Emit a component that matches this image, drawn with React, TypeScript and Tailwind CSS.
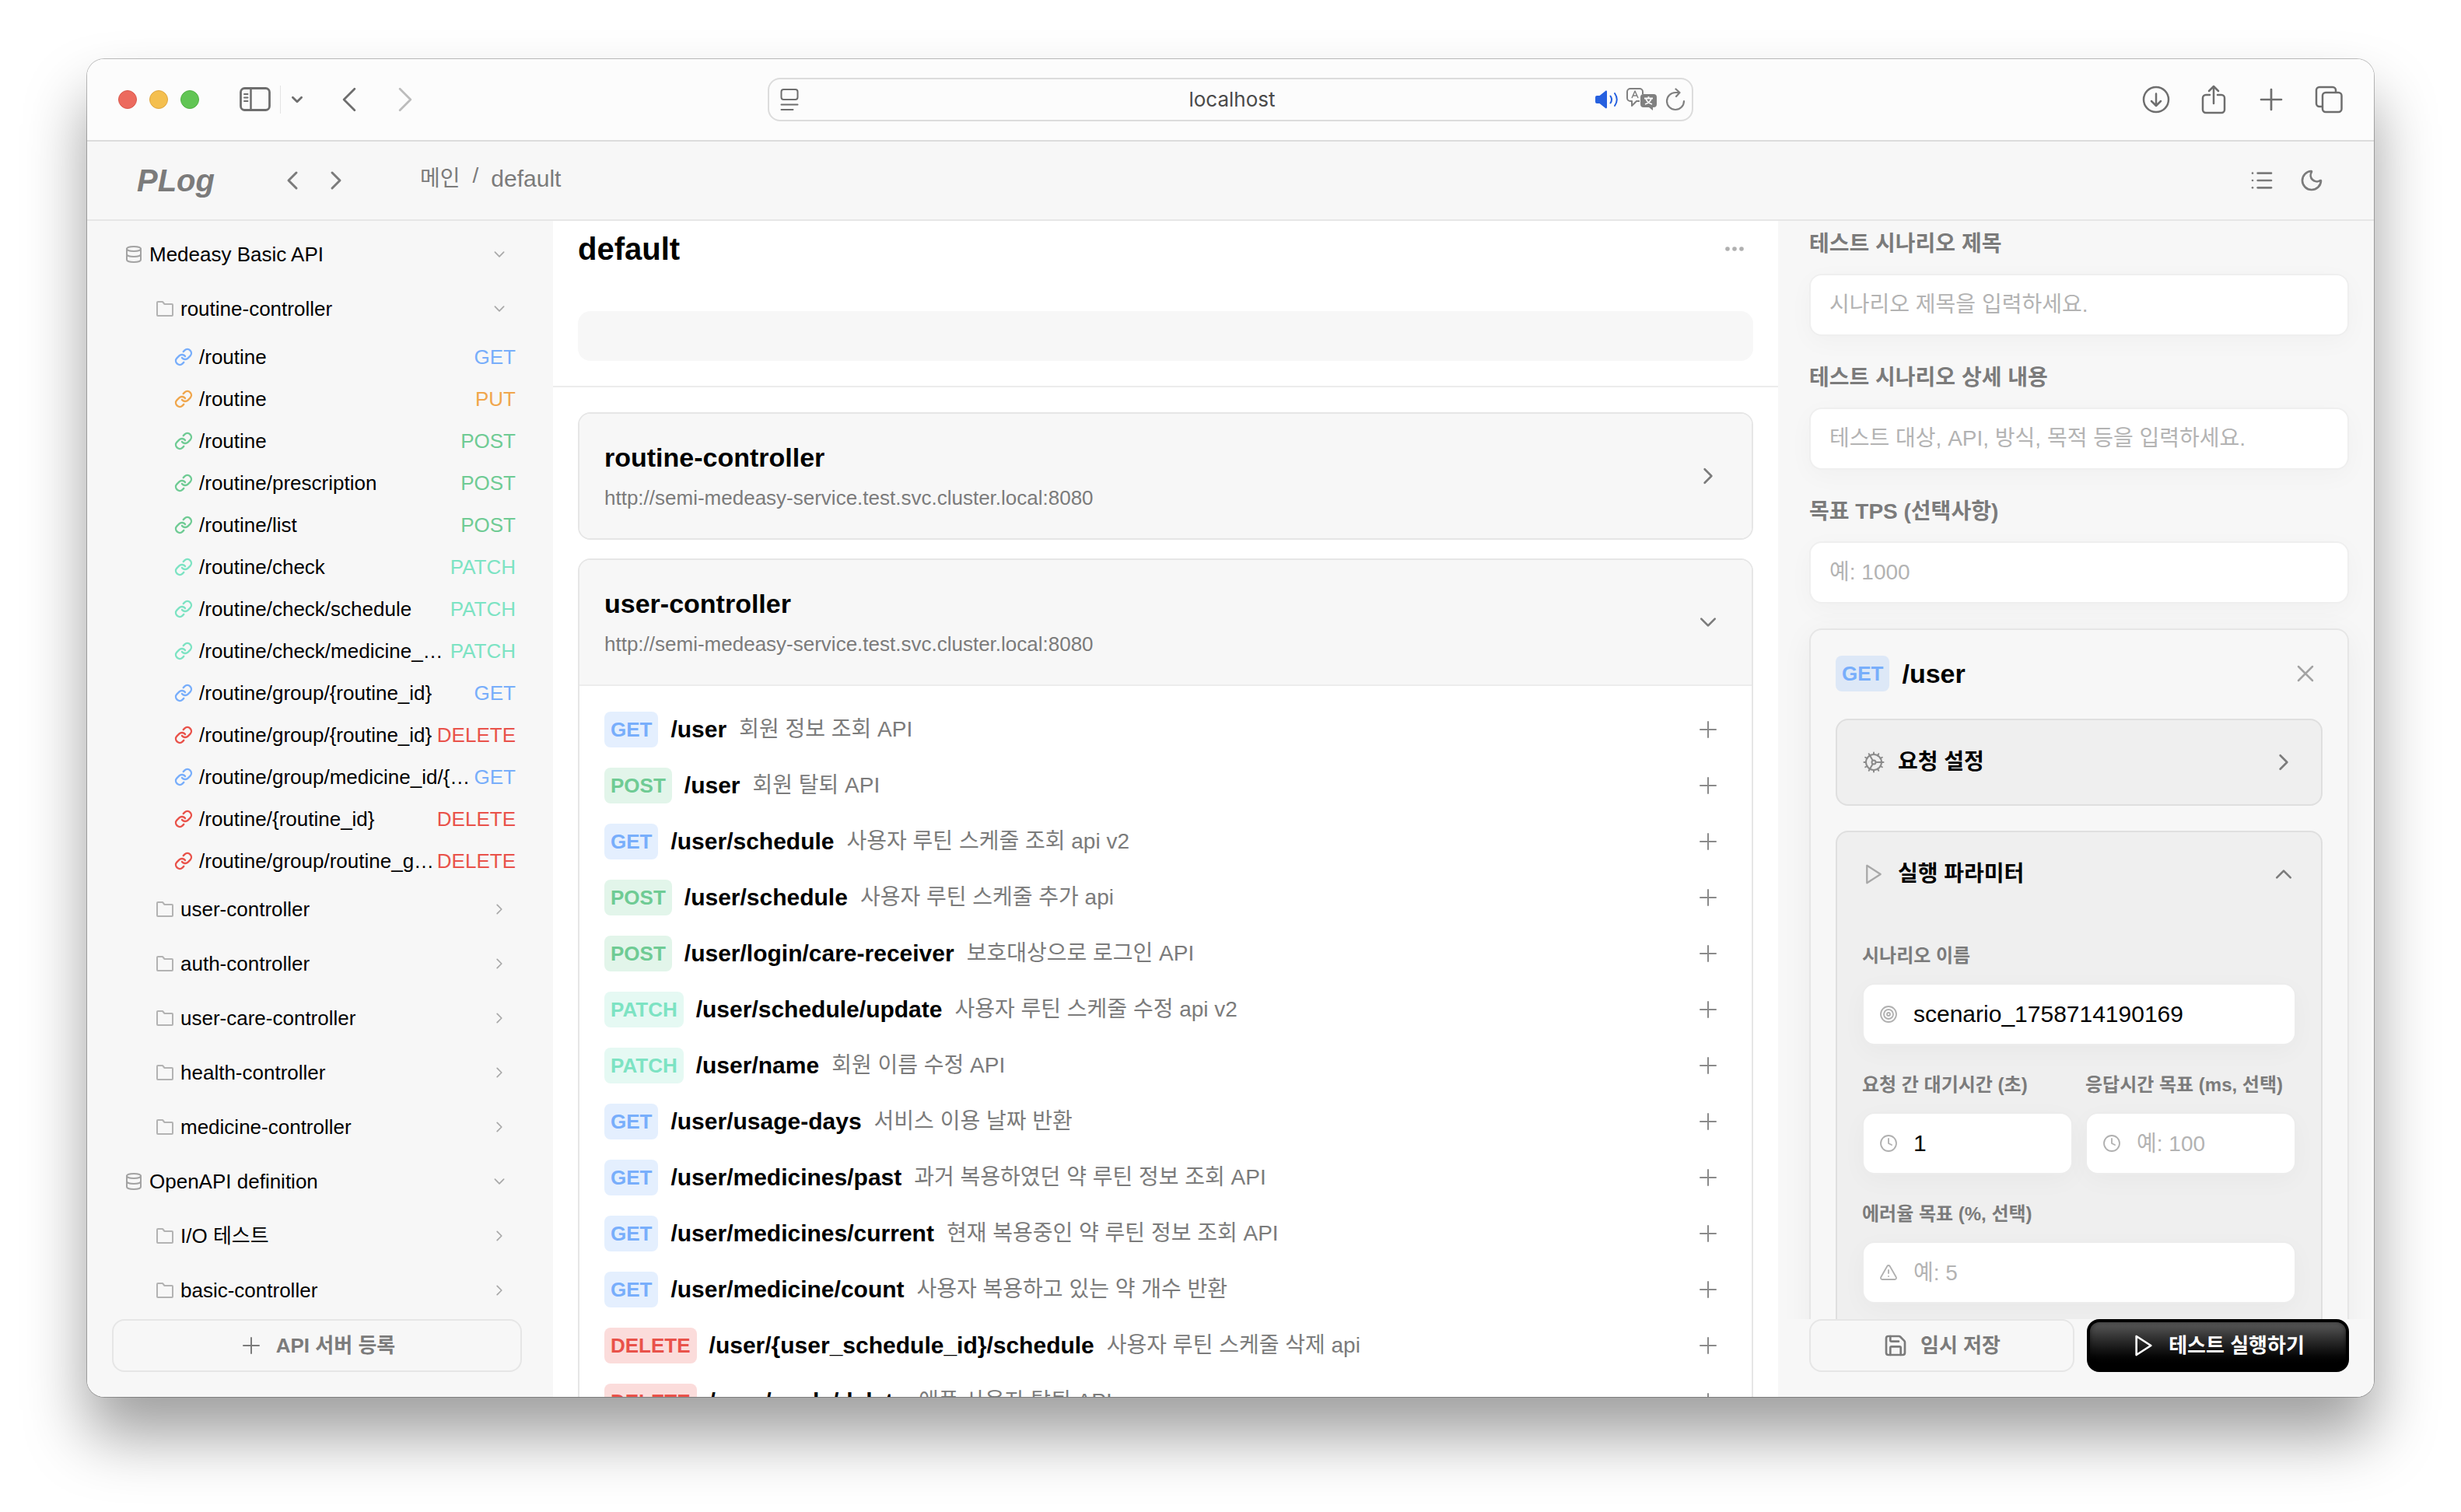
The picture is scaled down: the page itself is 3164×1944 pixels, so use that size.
import type { ReactNode } from "react";
import {
  Clock,
  Cog,
  Database,
  Link,
  List,
  Moon,
  Save,
  Target,
  TriangleAlert,
} from "lucide-react";

type Method = "GET" | "PUT" | "POST" | "PATCH" | "DELETE";

const methodText: Record<Method, string> = {
  GET: "text-[#78aefb]",
  PUT: "text-[#f0a64c]",
  POST: "text-[#6fcb94]",
  PATCH: "text-[#7de3c3]",
  DELETE: "text-[#e9524a]",
};

const methodBadge: Record<Method, string> = {
  GET: "bg-[#78aefb]/20 text-[#78aefb]",
  PUT: "bg-[#f0a64c]/20 text-[#f0a64c]",
  POST: "bg-[#6fcb94]/20 text-[#6fcb94]",
  PATCH: "bg-[#7de3c3]/20 text-[#7de3c3]",
  DELETE: "bg-[#e9524a]/20 text-[#e9524a]",
};

const routineApis: [Method, string][] = [
  ["GET", "/routine"],
  ["PUT", "/routine"],
  ["POST", "/routine"],
  ["POST", "/routine/prescription"],
  ["POST", "/routine/list"],
  ["PATCH", "/routine/check"],
  ["PATCH", "/routine/check/schedule"],
  ["PATCH", "/routine/check/medicine_…"],
  ["GET", "/routine/group/{routine_id}"],
  ["DELETE", "/routine/group/{routine_id}"],
  ["GET", "/routine/group/medicine_id/{…"],
  ["DELETE", "/routine/{routine_id}"],
  ["DELETE", "/routine/group/routine_g…"],
];

const userApis: [Method, string, string][] = [
  ["GET", "/user", "회원 정보 조회 API"],
  ["POST", "/user", "회원 탈퇴 API"],
  ["GET", "/user/schedule", "사용자 루틴 스케줄 조회 api v2"],
  ["POST", "/user/schedule", "사용자 루틴 스케줄 추가 api"],
  ["POST", "/user/login/care-receiver", "보호대상으로 로그인 API"],
  ["PATCH", "/user/schedule/update", "사용자 루틴 스케줄 수정 api v2"],
  ["PATCH", "/user/name", "회원 이름 수정 API"],
  ["GET", "/user/usage-days", "서비스 이용 날짜 반환"],
  ["GET", "/user/medicines/past", "과거 복용하였던 약 루틴 정보 조회 API"],
  ["GET", "/user/medicines/current", "현재 복용중인 약 루틴 정보 조회 API"],
  ["GET", "/user/medicine/count", "사용자 복용하고 있는 약 개수 반환"],
  ["DELETE", "/user/{user_schedule_id}/schedule", "사용자 루틴 스케줄 삭제 api"],
  ["DELETE", "/user/apple/delete", "애플 사용자 탈퇴 API"],
];

const chevronPath = {
  right: "M11 6l10 10-10 10",
  left: "M21 6L11 16l10 10",
  down: "M6 11l10 10 10-10",
  up: "M6 21l10-10 10 10",
};

function Chevron({
  dir,
  className,
  width = 3,
}: {
  dir: keyof typeof chevronPath;
  className: string;
  width?: number;
}) {
  return (
    <svg
      viewBox="0 0 32 32"
      fill="none"
      stroke="currentColor"
      strokeWidth={width}
      strokeLinecap="round"
      strokeLinejoin="round"
      className={className}
      aria-hidden="true"
    >
      <path d={chevronPath[dir]} />
    </svg>
  );
}

function PlusIcon({ className, width = 2 }: { className: string; width?: number }) {
  return (
    <svg
      viewBox="0 0 32 32"
      fill="none"
      stroke="currentColor"
      strokeWidth={width}
      strokeLinecap="round"
      className={className}
      aria-hidden="true"
    >
      <path d="M16 6v20M6 16h20" />
    </svg>
  );
}

function PlayIcon({ className, width = 2 }: { className: string; width?: number }) {
  return (
    <svg
      viewBox="0 0 24 24"
      fill="none"
      stroke="currentColor"
      strokeWidth={width}
      strokeLinecap="round"
      strokeLinejoin="round"
      className={className}
      aria-hidden="true"
    >
      <path d="M5 3l14 9-14 9z" />
    </svg>
  );
}

function FolderIcon() {
  return (
    <svg
      viewBox="0 0 24 24"
      fill="none"
      stroke="currentColor"
      strokeWidth="2"
      strokeLinejoin="round"
      className="size-6 shrink-0 text-[#b3b3b3]"
      aria-hidden="true"
    >
      <path d="M2 4a1 1 0 0 1 1-1h6l2.500 3H21a1 1 0 0 1 1 1v13a1 1 0 0 1-1 1H3a1 1 0 0 1-1-1z" />
    </svg>
  );
}

function TitleBar() {
  return (
    <div className="grid h-[106px] shrink-0 grid-cols-[1fr_minmax(0,1190px)_1fr] items-center border-b-2 border-[#dcdcdc] bg-[#fcfcfc] text-[#6e6e6e]">
      <div className="flex items-center pl-10">
        <div className="flex gap-4">
          <button aria-label="Close" className="size-6 rounded-full border border-[#d9584c] bg-[#ec6a5e]" />
          <button aria-label="Minimize" className="size-6 rounded-full border border-[#dfa640] bg-[#f4bf4f]" />
          <button aria-label="Zoom" className="size-6 rounded-full border border-[#50b043] bg-[#61c554]" />
        </div>
        <button aria-label="Sidebar" className="ml-[52px]">
          <svg viewBox="0 0 40 32" fill="none" stroke="currentColor" strokeWidth="2.800" className="h-8 w-10">
            <rect x="1.500" y="1.500" width="37" height="28" rx="5" />
            <path d="M14.500 2v27" strokeWidth="2.500" />
            <path d="M6 9h4.500M6 13.500h4.500M6 18h4.500" strokeWidth="2" strokeLinecap="round" />
          </svg>
        </button>
        <div className="ml-3 h-9 w-px bg-[#e3e3e3]" />
        <button aria-label="Tab groups" className="ml-3">
          <Chevron dir="down" width={5} className="size-[18px]" />
        </button>
        <button aria-label="Back" className="ml-9">
          <Chevron dir="left" className="size-11" width={2} />
        </button>
        <button aria-label="Forward" className="ml-7 text-[#bcbcbc]">
          <Chevron dir="right" className="size-11" width={2} />
        </button>
      </div>
      <div className="grid h-14 grid-cols-[130px_1fr_130px] items-center rounded-2xl border-2 border-[#dcdcdc]">
        <button aria-label="Reader" className="ml-3.5 justify-self-start">
          <svg viewBox="0 0 24 30" fill="none" stroke="currentColor" strokeWidth="2" strokeLinecap="round" className="h-[30px] w-6">
            <rect x="1.500" y="2" width="21" height="13" rx="3" />
            <path d="M1.500 21.500h21M1.500 28h15" />
          </svg>
        </button>
        <input
          aria-label="Address"
          defaultValue="localhost"
          className="w-full bg-transparent pl-1 text-center font-['Inter',sans-serif] text-[26px] leading-8 text-[#4a4a4a] outline-none"
        />
        <div className="flex items-center justify-end gap-2.5 pr-2">
          <button aria-label="Mute" className="text-[#2660df]">
            <svg viewBox="0 0 30 24" className="h-6 w-[30px]" fill="currentColor">
              <path d="M0 9a2 2 0 0 1 2-2h3.500L13 1c1-.8 2-.3 2 1v20c0 1.300-1 1.800-2 1l-7.500-6H2a2 2 0 0 1-2-2z" />
              <path d="M19.500 7.500q3 4.500 0 9M25 4q5.500 8 0 16" fill="none" stroke="currentColor" strokeWidth="2" strokeLinecap="round" />
            </svg>
          </button>
          <button aria-label="Translate" className="text-[#808080]">
            <svg viewBox="0 0 40 30" className="h-[30px] w-10" fill="none" stroke="currentColor" strokeWidth="2" strokeLinejoin="round">
              <path d="M17 17h-4l-6 6v-6H5a4 4 0 0 1-4-4V5a4 4 0 0 1 4-4h12a4 4 0 0 1 4 4v3" />
              <path d="M7 13l4-9 4 9M8.500 10h5" strokeWidth="1.500" />
              <path d="M22 8h13a4 4 0 0 1 4 4v9a4 4 0 0 1-4 4h-1v4l-5-4h-7a4 4 0 0 1-4-4v-9a4 4 0 0 1 4-4z" fill="currentColor" stroke="none" />
              <path d="M23 13.500h11M28.500 11v2.500M32 14q-2 5-8 7M25 14q2 5 8 7" stroke="#fcfcfc" strokeWidth="1.800" />
            </svg>
          </button>
          <button aria-label="Reload">
            <svg viewBox="0 0 26 30" className="h-[30px] w-[26px] text-[#808080]" fill="none" stroke="currentColor" strokeWidth="2.200" strokeLinecap="round" strokeLinejoin="round">
              <path d="M24 17a11 11 0 1 1-11-11h5" />
              <path d="M13.500 1.500L18.500 6l-4.500 5" />
            </svg>
          </button>
        </div>
      </div>
      <div className="flex items-center justify-end gap-[38px] pr-10">
        <button aria-label="Downloads">
          <svg viewBox="0 0 36 36" className="size-9" fill="none" stroke="currentColor" strokeWidth="2.500" strokeLinecap="round" strokeLinejoin="round">
            <circle cx="18" cy="18" r="16" />
            <path d="M18 10.500v15M12 20l6 6 6-6" />
          </svg>
        </button>
        <button aria-label="Share">
          <svg viewBox="0 0 36 40" className="h-10 w-9" fill="none" stroke="currentColor" strokeWidth="2.500" strokeLinecap="round" strokeLinejoin="round">
            <path d="M13 14H8a4 4 0 0 0-4 4v15a4 4 0 0 0 4 4h20a4 4 0 0 0 4-4V18a4 4 0 0 0-4-4h-5" />
            <path d="M18 25V3M12 9l6-6 6 6" />
          </svg>
        </button>
        <button aria-label="New tab">
          <svg viewBox="0 0 36 36" className="size-9" fill="none" stroke="currentColor" strokeWidth="2.700" strokeLinecap="round">
            <path d="M18 5v26M5 18h26" />
          </svg>
        </button>
        <button aria-label="Tab overview">
          <svg viewBox="0 0 36 36" className="size-9" fill="none" stroke="currentColor" strokeWidth="2.500" strokeLinejoin="round">
            <rect x="10" y="9" width="24.500" height="25" rx="4" />
            <path d="M10 27H6a4 4 0 0 1-4-4V6a4 4 0 0 1 4-4h17a4 4 0 0 1 4 4v3" />
          </svg>
        </button>
      </div>
    </div>
  );
}

function AppHeader() {
  return (
    <header className="flex h-[102px] shrink-0 items-center border-b-2 border-[#e6e6e6] bg-[#f7f7f7] pl-16 text-[#7b7b7b]">
      <a href="#" className="w-[184px] text-[40px] leading-[48px] font-bold italic">
        PLog
      </a>
      <div className="flex gap-6">
        <button aria-label="이전">
          <Chevron dir="left" width={3} className="size-8" />
        </button>
        <button aria-label="다음">
          <Chevron dir="right" width={3} className="size-8" />
        </button>
      </div>
      <nav className="ml-[92px] flex items-center gap-4 pb-1">
        <a href="#" className="text-[28px] leading-9">
          메인
        </a>
        <span className="pb-2 text-[28px] leading-8">/</span>
        <a href="#" className="text-[30px] leading-9">
          default
        </a>
      </nav>
      <div className="ml-auto flex items-center gap-8 pr-16">
        <button aria-label="목록">
          <List className="size-8" strokeWidth={2} />
        </button>
        <button aria-label="다크 모드">
          <Moon className="size-8" strokeWidth={2} />
        </button>
      </div>
    </header>
  );
}

function TreeRow({
  kind,
  label,
  open,
}: {
  kind: "server" | "folder";
  label: string;
  open?: boolean;
}) {
  return (
    <button
      className={
        kind === "server"
          ? "flex h-[70px] w-full shrink-0 items-center gap-2 pr-3 pl-4 text-left"
          : "flex h-[70px] w-full shrink-0 items-center gap-2 pr-3 pl-14 text-left"
      }
    >
      {kind === "server" ? (
        <Database className="size-6 shrink-0 text-[#a3a3a3]" strokeWidth={2} />
      ) : (
        <FolderIcon />
      )}
      <span className="min-w-0 flex-1 truncate text-[26px] leading-[39px]">{label}</span>
      <Chevron
        dir={open ? "down" : "right"}
        width={3}
        className="size-[18px] shrink-0 text-[#a8a8a8]"
      />
    </button>
  );
}

function Sidebar() {
  return (
    <aside className="flex w-[599px] shrink-0 flex-col bg-[#f7f7f7] pr-10 pb-8 pl-8">
      <div className="flex min-h-0 flex-1 flex-col overflow-hidden pt-2 pr-2">
        <TreeRow kind="server" label="Medeasy Basic API" open />
        <TreeRow kind="folder" label="routine-controller" open />
        {routineApis.map(([method, path], i) => (
          <a key={i} href="#" className="flex h-[54px] shrink-0 items-center pl-20 text-[26px] leading-[39px]">
            <Link className={`mr-2 size-6 shrink-0 ${methodText[method]}`} strokeWidth={2.4} />
            <span className="min-w-0 flex-1 whitespace-nowrap">{path}</span>
            <span className={methodText[method]}>{method}</span>
          </a>
        ))}
        <TreeRow kind="folder" label="user-controller" />
        <TreeRow kind="folder" label="auth-controller" />
        <TreeRow kind="folder" label="user-care-controller" />
        <TreeRow kind="folder" label="health-controller" />
        <TreeRow kind="folder" label="medicine-controller" />
        <TreeRow kind="server" label="OpenAPI definition" open />
        <TreeRow kind="folder" label="I/O 테스트" />
        <TreeRow kind="folder" label="basic-controller" />
      </div>
      <button className="flex h-[68px] shrink-0 items-center justify-center gap-4 rounded-2xl border-2 border-[#e6e6e6] text-[26px] leading-8 font-semibold text-[#7b7b7b]">
        <PlusIcon className="size-8" width={2} />
        API 서버 등록
      </button>
    </aside>
  );
}

function Badge({ method }: { method: Method }) {
  return (
    <span className={`rounded-lg px-2 text-[26px] leading-[46px] font-bold ${methodBadge[method]}`}>
      {method}
    </span>
  );
}

function ControllerHeader({ name, open }: { name: string; open?: boolean }) {
  return (
    <button className="flex w-full items-center bg-[#f7f7f7] p-8 text-left">
      <span className="flex flex-1 flex-col gap-2">
        <span className="text-[34px] leading-[48px] font-bold">{name}</span>
        <span className="text-[26px] leading-10 text-[#7b7b7b]">
          http://semi-medeasy-service.test.svc.cluster.local:8080
        </span>
      </span>
      <Chevron
        dir={open ? "down" : "right"}
        width={3}
        className="mr-2.5 size-7 text-[#7b7b7b]"
      />
    </button>
  );
}

function MainPanel() {
  return (
    <main className="min-w-0 flex-1 overflow-hidden bg-white">
      <section className="border-b-2 border-[#ececec] px-8 pt-3 pb-8">
        <div className="flex items-center justify-between">
          <h1 className="text-[40px] leading-[48px] font-bold">default</h1>
          <button aria-label="더보기" className="mr-3 text-[#b0b0b0]">
            <svg viewBox="0 0 24 8" className="h-2 w-6" fill="currentColor">
              <circle cx="3" cy="4" r="2.800" />
              <circle cx="12" cy="4" r="2.800" />
              <circle cx="21" cy="4" r="2.800" />
            </svg>
          </button>
        </div>
        <input
          aria-label="설명"
          className="mt-14 block h-16 w-full rounded-2xl bg-[#f7f7f7] px-6 text-[28px] outline-none"
        />
      </section>
      <section className="flex flex-col gap-6 px-8 pt-8">
        <article className="overflow-hidden rounded-2xl border-2 border-[#e6e6e6]">
          <ControllerHeader name="routine-controller" />
        </article>
        <article className="overflow-hidden rounded-2xl border-2 border-[#e6e6e6]">
          <ControllerHeader name="user-controller" open />
          <ul className="border-t-2 border-[#ececec] px-8 pt-5 pb-5">
            {userApis.map(([method, path, desc]) => (
              <li key={method + path} className="flex h-[72px] items-center gap-4">
                <Badge method={method} />
                <span className="text-[30px] leading-10 font-bold">{path}</span>
                <span className="text-[28px] leading-10 text-[#7b7b7b]">{desc}</span>
                <button aria-label={`${path} 추가`} className="mr-2 ml-auto text-[#8a8a8a]">
                  <PlusIcon className="size-8" width={2} />
                </button>
              </li>
            ))}
          </ul>
        </article>
      </section>
    </main>
  );
}

const fieldBox =
  "flex h-20 w-full items-center rounded-2xl border-2 bg-white shadow-[0_8px_32px_rgba(0,0,0,0.03)]";

function TopField({ id, label, placeholder }: { id: string; label: string; placeholder: string }) {
  return (
    <div className="mb-8">
      <label htmlFor={id} className="block pb-4 text-[28px] leading-[44px] font-semibold text-[#7b7b7b]">
        {label}
      </label>
      <div className={`${fieldBox} border-[#efefef]`}>
        <input
          id={id}
          placeholder={placeholder}
          className="w-full bg-transparent px-6 text-[28px] leading-10 outline-none placeholder:text-[#b3b3b3]"
        />
      </div>
    </div>
  );
}

function IconField({
  id,
  label,
  icon,
  value,
  placeholder,
}: {
  id: string;
  label: string;
  icon: ReactNode;
  value?: string;
  placeholder?: string;
}) {
  return (
    <div className="min-w-0">
      <label htmlFor={id} className="block truncate pb-4 text-[24px] leading-[38px] font-semibold text-[#7b7b7b]">
        {label}
      </label>
      <div className={`${fieldBox} border-[#ececec] pl-5 text-[#b0b0b0]`}>
        {icon}
        <input
          id={id}
          defaultValue={value}
          placeholder={placeholder}
          className="ml-5 w-full min-w-0 bg-transparent text-[30px] leading-10 text-black outline-none placeholder:text-[28px] placeholder:text-[#b3b3b3]"
        />
      </div>
    </div>
  );
}

function TestPanel() {
  return (
    <aside className="flex w-[766px] shrink-0 flex-col bg-[#f7f7f7] pb-8">
      <div className="min-h-0 flex-1 overflow-hidden pt-2 pr-8 pl-10">
        <TopField id="title" label="테스트 시나리오 제목" placeholder="시나리오 제목을 입력하세요." />
        <TopField
          id="detail"
          label="테스트 시나리오 상세 내용"
          placeholder="테스트 대상, API, 방식, 목적 등을 입력하세요."
        />
        <TopField id="tps" label="목표 TPS (선택사항)" placeholder="예: 1000" />
        <div className="rounded-2xl border-2 border-[#e6e6e6] p-8 shadow-[0_8px_40px_rgba(0,0,0,0.05)]">
          <div className="flex h-12 items-center gap-4">
            <Badge method="GET" />
            <span className="text-[34px] leading-10 font-bold">/user</span>
            <button aria-label="삭제" className="mr-1.5 ml-auto text-[#a3a3a3]">
              <svg viewBox="0 0 32 32" className="size-8" fill="none" stroke="currentColor" strokeWidth="2.500" strokeLinecap="round">
                <path d="M7 7l18 18M25 7L7 25" />
              </svg>
            </button>
          </div>
          <button className="mt-[34px] flex h-28 w-full items-center rounded-2xl border-2 border-[#dfdfdf] bg-[#efefef] px-8">
            <Cog className="size-[30px] text-[#8a8a8a]" strokeWidth={1.6} />
            <span className="ml-4 text-[28px] leading-10 font-bold">요청 설정</span>
            <Chevron dir="right" width={3} className="mr-0.5 ml-auto size-7 text-[#7b7b7b]" />
          </button>
          <div className="mt-8 rounded-2xl border-2 border-[#dfdfdf] bg-[#efefef]">
            <button className="flex h-[108px] w-full items-center px-8">
              <PlayIcon className="size-[30px] text-[#a8a8a8]" width={1.8} />
              <span className="ml-4 text-[28px] leading-10 font-bold">실행 파라미터</span>
              <Chevron dir="up" width={3} className="mr-0.5 ml-auto size-7 text-[#7b7b7b]" />
            </button>
            <div className="grid grid-cols-2 gap-x-4 gap-y-8 p-8">
              <div className="col-span-2">
                <IconField
                  id="name"
                  label="시나리오 이름"
                  icon={<Target className="size-6 shrink-0" strokeWidth={1.8} />}
                  value="scenario_1758714190169"
                />
              </div>
              <IconField
                id="wait"
                label="요청 간 대기시간 (초)"
                icon={<Clock className="size-6 shrink-0" strokeWidth={1.8} />}
                value="1"
              />
              <IconField
                id="response"
                label="응답시간 목표 (ms, 선택)"
                icon={<Clock className="size-6 shrink-0" strokeWidth={1.8} />}
                placeholder="예: 100"
              />
              <div className="col-span-2">
                <IconField
                  id="error"
                  label="에러율 목표 (%, 선택)"
                  icon={<TriangleAlert className="size-6 shrink-0" strokeWidth={1.8} />}
                  placeholder="예: 5"
                />
              </div>
            </div>
          </div>
        </div>
      </div>
      <div className="flex gap-4 pr-8 pl-10">
        <button className="flex h-[68px] flex-1 items-center justify-center gap-4 rounded-2xl border-2 border-[#e6e6e6] text-[26px] leading-8 font-semibold text-[#7b7b7b]">
          <Save className="size-8" strokeWidth={2} />
          임시 저장
        </button>
        <button className="flex h-[68px] w-[337px] items-center justify-center gap-4 rounded-2xl border-4 border-black bg-linear-to-b from-[#5c5c5c] to-black text-[26px] leading-8 font-semibold text-white shadow-[inset_0_0_6px_rgba(0,0,0,0.5)]">
          <PlayIcon className="size-8" width={2} />
          테스트 실행하기
        </button>
      </div>
    </aside>
  );
}

export default function App() {
  return (
    <div className="flex h-screen bg-white px-28 pt-[76px] pb-[148px] font-['Liberation_Sans','Noto_Sans_CJK_KR',sans-serif] text-black">
      <div className="flex min-w-0 flex-1 rounded-[22px] shadow-[0_0_0_1px_rgba(0,0,0,0.25),0_50px_80px_rgba(0,0,0,0.38)]">
        <div className="flex min-w-0 flex-1 flex-col overflow-hidden rounded-[22px] bg-[#f7f7f7]">
          <TitleBar />
          <AppHeader />
          <div className="flex min-h-0 flex-1">
            <Sidebar />
            <MainPanel />
            <TestPanel />
          </div>
        </div>
      </div>
    </div>
  );
}
